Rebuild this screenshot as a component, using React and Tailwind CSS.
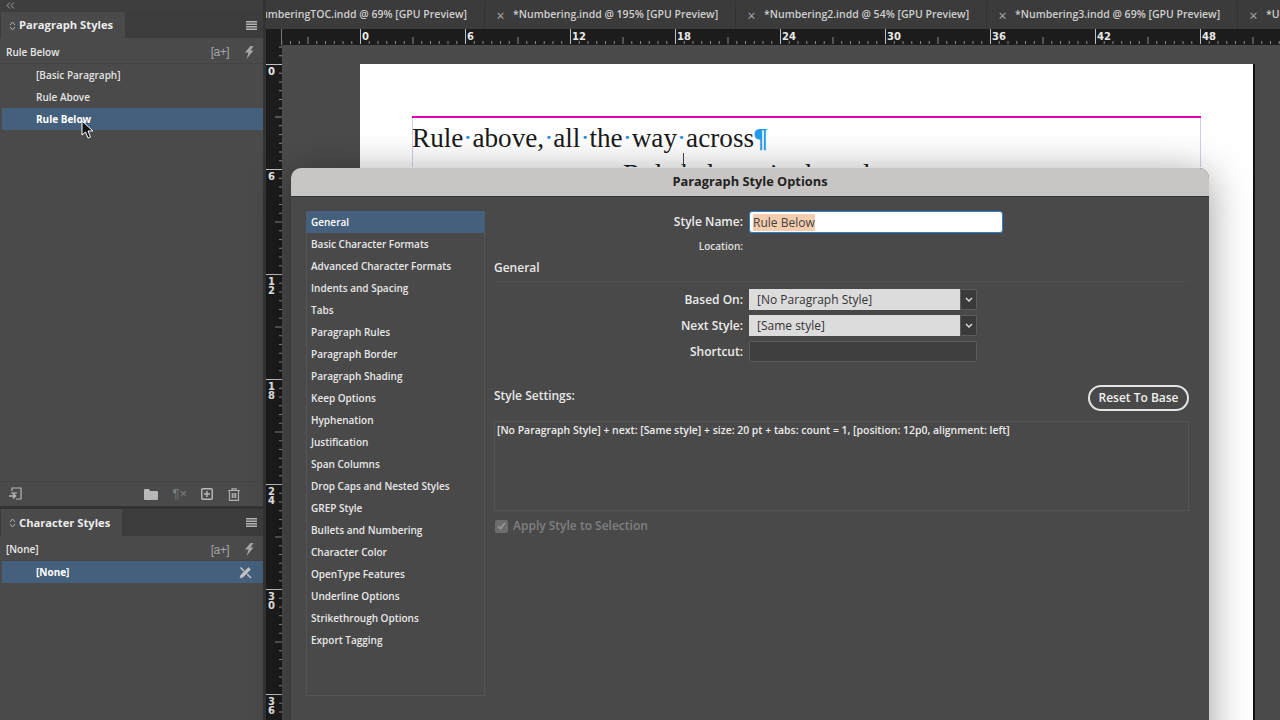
const uiFont = "font-['Open_Sans',sans-serif]"

const tabs = [
  "*NumberingTOC.indd @ 69% [GPU Preview]",
  "*Numbering.indd @ 195% [GPU Preview]",
  "*Numbering2.indd @ 54% [GPU Preview]",
  "*Numbering3.indd @ 69% [GPU Preview]",
  "*Untitled-1.indd @ 69% [GPU Preview]",
]

const categories = [
  "General",
  "Basic Character Formats",
  "Advanced Character Formats",
  "Indents and Spacing",
  "Tabs",
  "Paragraph Rules",
  "Paragraph Border",
  "Paragraph Shading",
  "Keep Options",
  "Hyphenation",
  "Justification",
  "Span Columns",
  "Drop Caps and Nested Styles",
  "GREP Style",
  "Bullets and Numbering",
  "Character Color",
  "OpenType Features",
  "Underline Options",
  "Strikethrough Options",
  "Export Tagging",
]

function Hamburger() {
  return (
    <svg width="11" height="9" viewBox="0 0 11 9" fill="#b5b5b5">
      <rect width="11" height="1.5" />
      <rect y="2.5" width="11" height="1.5" />
      <rect y="5" width="11" height="1.5" />
      <rect y="7.5" width="11" height="1.5" />
    </svg>
  )
}

function UpDown() {
  return (
    <svg width="7" height="10" viewBox="0 0 7 10" fill="none" stroke="#b0b0b0" strokeWidth="1" className="shrink-0">
      <path d="M1 4 L3.5 1 L6 4" />
      <path d="M1 6 L3.5 9 L6 6" />
    </svg>
  )
}

function Bolt() {
  return (
    <svg width="10" height="13" viewBox="0 0 10 13" fill="#a5a5a5">
      <path d="M6.5 0 L9.5 0 L6.5 4.5 L9.5 4.5 L2.5 13 L4.5 6.5 L1 6.5 Z" />
    </svg>
  )
}

function PanelHeader({ title, tabWidth, height }) {
  return (
    <div className={`flex items-stretch bg-[#3c3c3c] ${height}`}>
      <div className={`flex items-center gap-[3px] pl-[8px] pt-[1px] bg-[#4a4a4a] ml-[1px] ${tabWidth}`}>
        <UpDown />
        <span className="text-[11.2px] font-bold text-[#ececec] whitespace-nowrap">{title}</span>
      </div>
      <div className="flex-1 flex items-center justify-end pr-[6px]">
        <Hamburger />
      </div>
    </div>
  )
}

function SubRow({ label, height }) {
  return (
    <div className={`flex items-center pl-[6px] pr-[9px] pt-[3px] border-b border-[#444] ${height}`}>
      <span className="flex-1 text-[10px] font-semibold text-[#e8e8e8]">{label}</span>
      <span className="font-['Liberation_Sans',sans-serif] text-[12px] tracking-[-0.5px] text-[#a5a5a5] mr-[15px]">[a+]</span>
      <Bolt />
    </div>
  )
}

function StyleRow({ label, selected, children }) {
  return (
    <div
      className={`flex items-center h-[22px] pl-[36px] pr-[11px] pt-[1px] ml-[2px] ${
        selected ? "bg-[#44607c] font-bold text-white" : "font-semibold text-[#e4e4e4]"
      } text-[10px]`}
    >
      <span className="flex-1 -ml-[2px]">{label}</span>
      {children}
    </div>
  )
}

function HorizontalTicks() {
  const ticks = []
  for (let i = 0; i < 12; i++) {
    const x = i * 8.75 + 0.5
    const h = i === 0 ? 16 : i === 6 ? 7 : 3
    ticks.push(<line key={i} x1={x} x2={x} y1={15 - h} y2={15} stroke={i === 0 ? "#c0c0c0" : "#8a8a8a"} />)
  }
  return (
    <svg width="105" height="16" className="absolute inset-0">
      {ticks}
    </svg>
  )
}

function VerticalTicks() {
  const ticks = []
  for (let i = 0; i < 12; i++) {
    const y = i * 8.75 + 0.5
    const w = i === 0 ? 16 : i === 6 ? 7 : 3
    ticks.push(<line key={i} y1={y} y2={y} x1={16 - w} x2={16} stroke={i === 0 ? "#c0c0c0" : "#8a8a8a"} />)
  }
  return (
    <svg width="16" height="105" className="absolute inset-0">
      {ticks}
    </svg>
  )
}

function HorizontalRuler() {
  return (
    <div className="flex h-[16px] bg-[#1c1c1c] shrink-0 overflow-hidden">
      <div className="w-[16px] shrink-0 border-r border-[#777]" />
      <div className="relative w-[78px] shrink-0 overflow-hidden">
        <div className="absolute left-[-27px] top-0 w-[105px] h-[16px]">
          <HorizontalTicks />
        </div>
      </div>
      {[0, 6, 12, 18, 24, 30, 36, 42, 48].map((n) => (
        <div key={n} className="relative w-[105px] h-[16px] shrink-0">
          <HorizontalTicks />
          <span className="absolute left-[2px] top-[1px] font-['DejaVu_Sans',sans-serif] text-[10px] leading-[14px] font-bold text-[#e8e8e8]">{n}</span>
        </div>
      ))}
    </div>
  )
}

function VerticalRuler() {
  return (
    <div className="w-[16px] shrink-0 bg-[#1c1c1c] overflow-hidden">
      <div className="relative h-[19px] overflow-hidden">
        <div className="absolute left-0 top-[-86px] w-[16px] h-[105px]">
          <VerticalTicks />
        </div>
      </div>
      {["0", "6", "12", "18", "24", "30", "36"].map((n) => (
        <div key={n} className="relative w-[16px] h-[105px]">
          <VerticalTicks />
          <div className="absolute left-[2px] top-[3px] flex flex-col font-['DejaVu_Sans',sans-serif] text-[10px] leading-[9px] font-bold text-[#e8e8e8]">
            {n.split("").map((d, i) => (
              <span key={i}>{d}</span>
            ))}
          </div>
        </div>
      ))}
    </div>
  )
}

function FormRow({ label, children }) {
  return (
    <div className="flex items-center h-[21px]">
      <span className="w-[255px] pr-[6px] text-right text-[12px] font-semibold text-[#ececec]">{label}</span>
      {children}
    </div>
  )
}

function SelectBox({ value }) {
  return (
    <div className="flex h-[21px] w-[228px]">
      <div className="w-[211px] bg-[#dcdcdc] pl-[8px] text-[12px] leading-[21px] font-medium text-[#333]">{value}</div>
      <div className="flex-1 flex items-center justify-center bg-[#3a3a3a] border border-[#5c5c5c] rounded-r-[2px]">
        <svg width="8" height="5" viewBox="0 0 8 5" fill="none" stroke="#e0e0e0" strokeWidth="1.4">
          <path d="M1 1 L4 4 L7 1" />
        </svg>
      </div>
    </div>
  )
}

export default function App() {
  const dot = <span className="text-[#2b8fe0]">·</span>
  return (
    <div className={`relative w-[1280px] h-[720px] overflow-hidden flex bg-[#3a3a3a] ${uiFont}`}>
      {/* Left panels */}
      <div className="w-[263px] shrink-0 flex flex-col bg-[#4a4a4a]">
        <div className="h-[12px] bg-[#3e3e3e] pl-[6px] pt-[2px]">
          <svg width="9" height="7" viewBox="0 0 9 7" fill="none" stroke="#a0a0a0" strokeWidth="1">
            <path d="M4 0.5 L1 3.5 L4 6.5 M8 0.5 L5 3.5 L8 6.5" />
          </svg>
        </div>
        <PanelHeader title="Paragraph Styles" tabWidth="w-[124px]" height="h-[26px]" />
        <SubRow label="Rule Below" height="h-[26px]" />
        <StyleRow label="[Basic Paragraph]" />
        <StyleRow label="Rule Above" />
        <StyleRow label="Rule Below" selected />
        <div className="flex-1" />
        <div className="h-[25px] flex items-center pl-[8px] border-t border-[#444]">
          <svg width="14" height="14" viewBox="0 0 14 14" fill="none" stroke="#b5b5b5" strokeWidth="1.2">
            <path d="M4 4 V1 H13 V12 H8" />
            <path d="M1 9 H7 M5 6.5 L7.5 9 L5 11.5" strokeWidth="1.6" />
            <path d="M3 6 H9" />
          </svg>
          <div className="flex-1" />
          <svg width="14" height="11" viewBox="0 0 14 11" fill="#b8b8b8" className="mr-[14px]">
            <path d="M0 1 Q0 0 1 0 H5 L6 2 H13 Q14 2 14 3 V10 Q14 11 13 11 H1 Q0 11 0 10 Z" />
          </svg>
          <span className="font-['Liberation_Sans',sans-serif] text-[13px] leading-[12px] text-[#7d7d7d] mr-[14px]">¶×</span>
          <svg width="12" height="12" viewBox="0 0 12 12" fill="none" stroke="#b8b8b8" className="mr-[15px]">
            <rect x="0.75" y="0.75" width="10.5" height="10.5" rx="1" strokeWidth="1.4" />
            <path d="M6 3 V9 M3 6 H9" strokeWidth="1.4" />
          </svg>
          <svg width="12" height="13" viewBox="0 0 12 13" fill="none" stroke="#b0b0b0" strokeWidth="1.2" className="mr-[23px]">
            <path d="M0 2.5 H12 M4 2.5 V0.8 H8 V2.5" />
            <path d="M1.5 2.5 V12.3 H10.5 V2.5" />
            <path d="M4.3 5 V10 M6 5 V10 M7.7 5 V10" />
          </svg>
        </div>
        <div className="h-[3px] bg-[#333]" />
        <PanelHeader title="Character Styles" tabWidth="w-[121px]" height="h-[27px]" />
        <SubRow label="[None]" height="h-[25px]" />
        <StyleRow label="[None]" selected>
          <svg width="13" height="13" viewBox="0 0 13 13" fill="none" stroke="#c4c4c4">
            <path d="M1 12 L1.8 9 L9.5 1.5 L11.5 3.5 L4 11 Z" fill="#c4c4c4" strokeWidth="0.6" />
            <path d="M1.5 1.5 L5 5 M8 8 L12 12" strokeWidth="1.5" />
          </svg>
        </StyleRow>
        <div className="h-[137px]" />
      </div>

      {/* Document area */}
      <div className="w-[3px] shrink-0 bg-[#333]" />
      <div className="flex-1 min-w-0 flex flex-col">
        <div className="h-[29px] shrink-0 bg-[#3b3b3b] flex overflow-hidden">
          <div className="flex shrink-0 -ml-[32px] pt-[1px] text-[10.5px] font-semibold text-[#cfcfcf]">
            {tabs.map((t, i) =>
              i === 0 ? (
                <div key={t} className="w-[251px] shrink-0 flex items-center justify-end pr-[17px] border-r border-[#333]">
                  <span className="whitespace-nowrap">{t}</span>
                </div>
              ) : (
                <div key={t} className="w-[251px] shrink-0 flex items-center border-r border-[#333] pl-[7px]">
                  <span className="w-[17px] mr-[4px] text-center text-[14px] font-normal text-[#aaa]">×</span>
                  <span className="whitespace-nowrap">{t}</span>
                </div>
              )
            )}
          </div>
        </div>
        <HorizontalRuler />
        <div className="flex-1 min-h-0 flex">
          <VerticalRuler />
          <div className="flex-1 bg-[#4b4b4b] pl-[78px] pt-[19px] overflow-hidden">
            <div className="w-[895px] h-[700px] bg-white border-r-2 border-[#111] pl-[52px] pt-[52px]">
              <div className="relative w-[789px] h-[51px] overflow-hidden border-t-2 border-[#e000b0] shadow-[inset_1px_0_0_#d8ccf0,inset_-1px_0_0_#d8ccf0] font-['Liberation_Serif',serif] text-[27.2px] text-[#1a1a1a] whitespace-nowrap">
                <div className="leading-[36px] pt-[2px]">
                  Rule{dot}above,{dot}all{dot}the{dot}way{dot}across<span className="text-[#1f9bf0] font-bold italic">¶</span>
                </div>
                <div className="leading-[24px] pt-[6px] pl-[211px]">Rule below, single style</div>
                <div className="absolute left-[271px] top-[35px] w-[1px] h-[16px] bg-[#444]" />
              </div>
            </div>
          </div>
        </div>
      </div>

      {/* Paragraph Style Options dialog */}
      <div className="absolute left-[291px] top-[168px] w-[918px] h-[600px] rounded-t-[10px] bg-[#494949] shadow-[0_6px_40px_rgba(0,0,0,0.4)] flex flex-col">
        <div className="h-[29px] shrink-0 rounded-t-[10px] bg-[#c8c6c4] border-b border-[#333] text-center text-[12.8px] font-bold leading-[27px] text-[#222]">
          Paragraph Style Options
        </div>
        <div className="flex pl-[15px] pt-[14px] pr-[20px] gap-[9px]">
          <div className="w-[179px] h-[485px] shrink-0 shadow-[inset_0_0_0_1px_#555] text-[10px] font-semibold text-[#e8e8e8]">
            {categories.map((c, i) => (
              <div key={c} className={`h-[22px] pl-[5px] leading-[22px] whitespace-nowrap ${i === 0 ? "bg-[#44607c] text-white" : ""}`}>
                {c}
              </div>
            ))}
          </div>
          <div className="flex-1 flex flex-col">
            <FormRow label="Style Name:">
              <div className="w-[254px] h-[22px] bg-white border border-[#2a7fd0] rounded-[3px] pl-[3px] text-[12px] leading-[21px] font-medium text-[#444]">
                <span className="bg-[#f5cdaf]">Rule Below</span>
              </div>
            </FormRow>
            <div className="h-[13px] mt-[8px] w-[255px] pr-[6px] text-right text-[10px] leading-[13px] font-semibold text-[#e0e0e0]">Location:</div>
            <div className="h-[16px] mt-[7px] text-[12px] leading-[16px] font-semibold text-[#e8e8e8]">General</div>
            <div className="mt-[5px] flex flex-col gap-[5px] pt-[7px] border-t border-[#4f4f4f]">
              <FormRow label="Based On:"><SelectBox value="[No Paragraph Style]" /></FormRow>
              <FormRow label="Next Style:"><SelectBox value="[Same style]" /></FormRow>
              <FormRow label="Shortcut:">
                <div className="w-[228px] h-[21px] bg-[#3f3f3f] border border-[#5c5c5c] rounded-[2px]" />
              </FormRow>
            </div>
            <div className="flex items-center justify-between mt-[23px] h-[26px]">
              <span className="pb-[4px] text-[12px] font-semibold text-[#e8e8e8]">Style Settings:</span>
              <button className="h-[26px] w-[101px] rounded-full border-2 border-[#e4e4e4] text-[12px] font-semibold text-[#f0f0f0]">Reset To Base</button>
            </div>
            <div className="mt-[10px] h-[90px] border border-[#525558] px-[2px] text-[10.45px] leading-[17px] font-semibold text-[#ececec]">
              [No Paragraph Style] + next: [Same style] + size: 20 pt + tabs: count = 1, [position: 12p0, alignment: left]
            </div>
            <div className="flex items-center mt-[8px] h-[14px] gap-[5px] pl-[1px]">
              <div className="w-[13px] h-[13px] rounded-[2px] bg-[#6d6d6d] flex items-center justify-center">
                <svg width="9" height="8" viewBox="0 0 9 8" fill="none" stroke="#9a9a9a" strokeWidth="1.6">
                  <path d="M1 4 L3.5 6.5 L8 1" />
                </svg>
              </div>
              <span className="text-[12px] font-semibold text-[#808080]">Apply Style to Selection</span>
            </div>
          </div>
        </div>
      </div>

      {/* Mouse pointer */}
      <svg width="13" height="19" viewBox="0 0 13 19" className="absolute left-[81px] top-[120px]">
        <path d="M1 1 L1 15 L4.5 12 L7 18 L9.5 17 L7 11 L12 11 Z" fill="#111" stroke="#fff" strokeWidth="1" />
      </svg>
    </div>
  )
}
